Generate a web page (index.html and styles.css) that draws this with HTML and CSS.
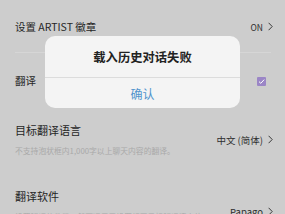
FILE: index.html
```html
<!DOCTYPE html>
<html lang="zh-CN">
<head>
<meta charset="utf-8">
<link rel="stylesheet" href="styles.css">
</head>
<body>
<div class="page">
  <div class="row row-top">
    <span class="label">设置 ARTIST 徽章</span>
    <span class="value value-small">ON<svg class="chev" viewBox="0 0 5 9" width="5" height="9"><path d="M0.6 0.8 L4.2 4.5 L0.6 8.2" fill="none" stroke="#3a3a3a" stroke-width="1"/></svg></span>
  </div>
  <div class="row row-check">
    <span class="label">翻译</span>
    <span class="checkbox"><svg viewBox="0 0 9 9" width="9" height="9"><path d="M2 4.6 L3.8 6.3 L7.2 2.6" fill="none" stroke="#fff" stroke-width="1"/></svg></span>
  </div>
  <div class="row row-desc">
    <div class="text">
      <div class="title">目标翻译语言</div>
      <div class="desc">不支持泡状框内1,000字以上聊天内容的翻译。</div>
    </div>
    <span class="value">中文 (简体)<svg class="chev" viewBox="0 0 5 9" width="5" height="9"><path d="M0.6 0.8 L4.2 4.5 L0.6 8.2" fill="none" stroke="#3a3a3a" stroke-width="1"/></svg></span>
  </div>
  <div class="row row-desc">
    <div class="text">
      <div class="title">翻译软件</div>
      <div class="desc narrow">设置翻译软件后，然可适用于设置相同目标翻译语言的软件。</div>
    </div>
    <span class="value">Papago<svg class="chev" viewBox="0 0 5 9" width="5" height="9"><path d="M0.6 0.8 L4.2 4.5 L0.6 8.2" fill="none" stroke="#3a3a3a" stroke-width="1"/></svg></span>
  </div>
</div>
<div class="dialog">
  <div class="dialog-title">载入历史对话失败</div>
  <div class="dialog-btn">确认</div>
</div>
</body>
</html>
```
FILE: styles.css
```css
* { box-sizing: border-box; }
html, body {
  margin: 0;
  padding: 0;
  width: 285px;
  height: 214px;
  overflow: hidden;
  background: #cdcdcd;
  font-family: "Noto Sans CJK SC", "Noto Sans", sans-serif;
  color: #262626;
}
.page {
  display: flex;
  flex-direction: column;
}
.row {
  display: flex;
  align-items: center;
  justify-content: space-between;
  padding: 0 12px 0 15px;
}
.row-top {
  height: 53px;
  position: relative;
}
.row-top::after {
  content: "";
  position: absolute;
  left: 15px;
  right: 14px;
  bottom: 0;
  height: 1px;
  background: #d6d6d6;
}
.row-check {
  height: 56px;
}
.label {
  font-size: 10.5px;
  line-height: 16px;
}
.value {
  display: flex;
  align-items: center;
  gap: 5px;
  font-size: 9.5px;
  line-height: 14px;
  color: #2e2e2e;
}
.value-small {
  font-size: 8.5px;
}
.chev {
  display: block;
}
.checkbox {
  width: 9px;
  height: 9px;
  margin-right: 7px;
  background: #9b86c6;
  border-radius: 1px;
  display: flex;
}
.row-desc {
  padding-top: 13px;
  padding-bottom: 18px;
}
.title {
  font-size: 11px;
  line-height: 16px;
}
.desc {
  margin-top: 7px;
  font-size: 7.8px;
  line-height: 12px;
  color: #a9a9a9;
}
.narrow {
  max-width: 192px;
}
.dialog {
  position: absolute;
  left: 45px;
  top: 36px;
  width: 195px;
  height: 72px;
  background: #f4f4f4;
  border-radius: 10px;
  display: flex;
  flex-direction: column;
}
.dialog-title {
  height: 42px;
  display: flex;
  align-items: center;
  justify-content: center;
  font-size: 12.3px;
  font-weight: 600;
  color: #222;
  border-bottom: 1px solid #dcdcdc;
}
.dialog-btn {
  flex: 1;
  display: flex;
  align-items: center;
  justify-content: center;
  font-size: 12px;
  color: #4f93cc;
}
```
